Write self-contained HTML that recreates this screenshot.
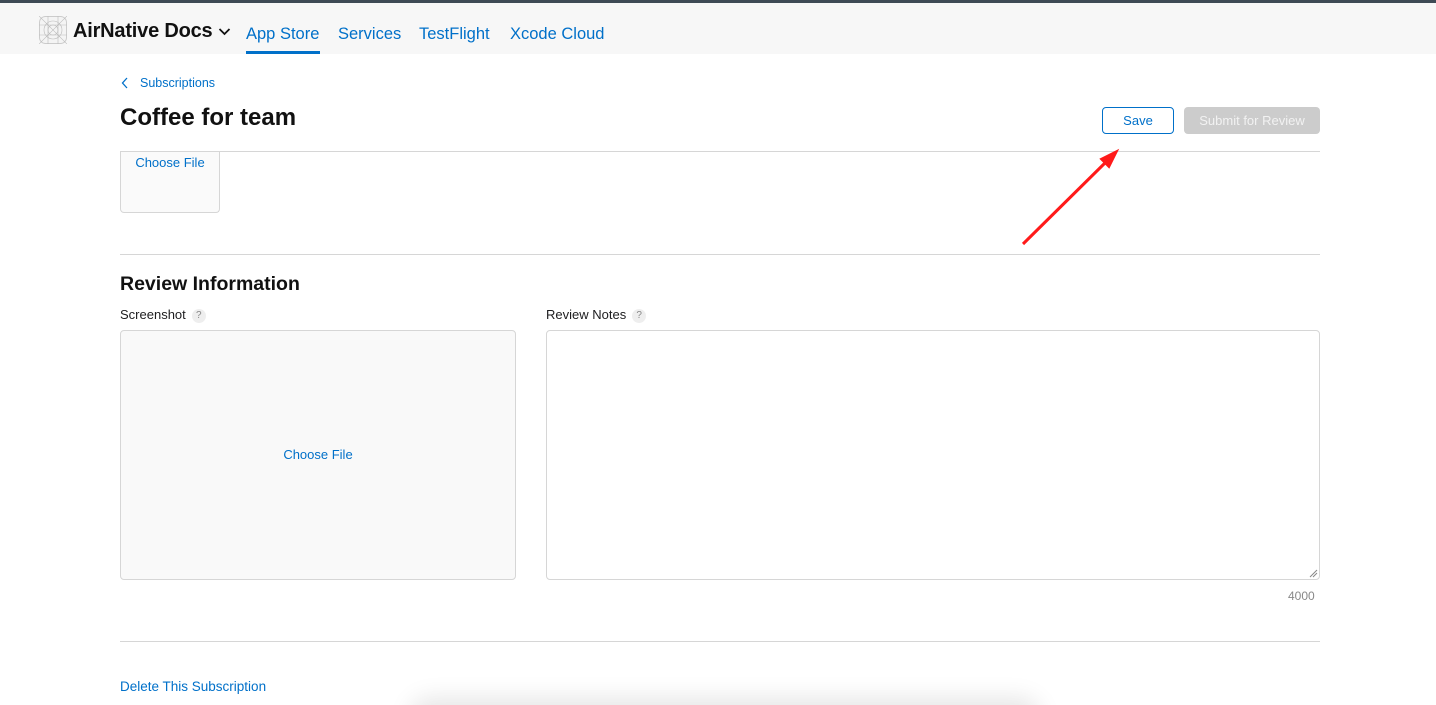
<!DOCTYPE html>
<html style="overflow:hidden;width:1436px;height:705px"><head><style>
*{box-sizing:border-box;margin:0;padding:0}
body{width:1436px;height:705px;overflow:hidden;background:#fff;font-family:"Liberation Sans",Arial,sans-serif;position:relative;color:#1d1d1f}
.a{position:absolute}
.blue{color:#0070c9}
.hr{position:absolute;left:120px;width:1200px;height:1px;background:#d6d6d6}
.q{display:inline-block;width:14px;height:14px;border-radius:50%;background:#eee;color:#888;font-size:10px;text-align:center;line-height:14px;margin-left:6px;vertical-align:1px}
</style></head><body>
<div class="a" style="left:0;top:0;width:1436px;height:3px;background:#3e4a55"></div>
<div class="a" style="left:0;top:3px;width:1436px;height:51px;background:#f7f7f7"></div>
<svg class="a" style="left:39px;top:16px" width="28" height="28" viewBox="0 0 28 28"><rect x="0.5" y="0.5" width="27" height="27" rx="6" fill="#f4f4f4" stroke="#ccc"/><g stroke="#bbb" stroke-width="0.6" fill="none"><circle cx="14" cy="14" r="9"/><circle cx="14" cy="14" r="5"/><path d="M0 0L28 28M28 0L0 28M9 0V28M19 0V28M0 9H28M0 19H28"/></g></svg>
<div class="a" style="left:73px;top:20px;font-size:20px;font-weight:bold;color:#111;letter-spacing:-0.2px">AirNative Docs</div>
<svg class="a" style="left:218px;top:27px" width="13" height="9"><path d="M1.5 2L6.5 7L11.5 2" stroke="#111" stroke-width="1.8" fill="none"/></svg>
<div class="a blue" style="left:246px;top:25px;font-size:16.5px">App Store</div>
<div class="a" style="left:246px;top:51px;width:74px;height:3px;background:#0070c9"></div>
<div class="a blue" style="left:338px;top:25px;font-size:16.5px">Services</div>
<div class="a blue" style="left:419px;top:25px;font-size:16.5px">TestFlight</div>
<div class="a blue" style="left:510px;top:25px;font-size:16.5px">Xcode Cloud</div>
<svg class="a" style="left:121px;top:77px" width="8" height="12"><path d="M6 1L1.5 6L6 11" stroke="#0070c9" stroke-width="1.3" fill="none"/></svg>
<div class="a blue" style="left:140px;top:76px;font-size:12.5px">Subscriptions</div>
<div class="a" style="left:120px;top:104px;font-size:24px;font-weight:bold;color:#111">Coffee for team</div>
<div class="a blue" style="left:1102px;top:107px;width:72px;height:27px;border:1px solid #0070c9;border-radius:4px;font-size:13px;text-align:center;line-height:25px">Save</div>
<div class="a" style="left:1184px;top:107px;width:136px;height:27px;background:#ccc;border-radius:4px;font-size:13px;text-align:center;line-height:27px;color:#f2f2f2">Submit for Review</div>
<div class="hr" style="top:151px"></div>
<div class="a" style="left:120px;top:152px;width:100px;height:61px;border:1px solid #d6d6d6;border-top:none;border-radius:0 0 4px 4px;background:#fafafa"></div>
<div class="a blue" style="left:120px;top:155px;width:100px;text-align:center;font-size:13px">Choose File</div>
<div class="hr" style="top:254px"></div>
<svg class="a" style="left:1015px;top:145px" width="110" height="105"><path d="M8 99L93 15" stroke="#ff1a1a" stroke-width="3"/><path d="M102 6L86 14L94 22Z" fill="#ff1a1a" stroke="#ff1a1a" stroke-width="2"/></svg>
<div class="a" style="left:120px;top:273px;font-size:19.5px;font-weight:bold;color:#111">Review Information</div>
<div class="a" style="left:120px;top:307px;font-size:13px">Screenshot<span class="q">?</span></div>
<div class="a" style="left:546px;top:307px;font-size:13px">Review Notes<span class="q">?</span></div>
<div class="a" style="left:120px;top:330px;width:396px;height:250px;border:1px solid #d6d6d6;border-radius:4px;background:#f9f9f9"></div>
<div class="a blue" style="left:120px;top:447px;width:396px;text-align:center;font-size:13px">Choose File</div>
<div class="a" style="left:546px;top:330px;width:774px;height:250px;border:1px solid #d6d6d6;border-radius:4px"></div>
<svg class="a" style="left:1309px;top:569px" width="9" height="9"><path d="M1 8L8 1M4 8L8 4" stroke="#888" stroke-width="1"/></svg>
<div class="a" style="left:1288px;top:589px;font-size:12px;color:#888">4000</div>
<div class="hr" style="top:641px"></div>
<div class="a blue" style="left:120px;top:679px;font-size:13.5px">Delete This Subscription</div>
<div class="a" style="left:380px;top:660px;width:700px;height:45px;overflow:hidden">
<div class="a" style="left:40px;top:52px;width:610px;height:20px;border-radius:20px;background:#ddd;box-shadow:0 -4px 24px 10px rgba(0,0,0,0.10)"></div>
</div>
</body></html>
